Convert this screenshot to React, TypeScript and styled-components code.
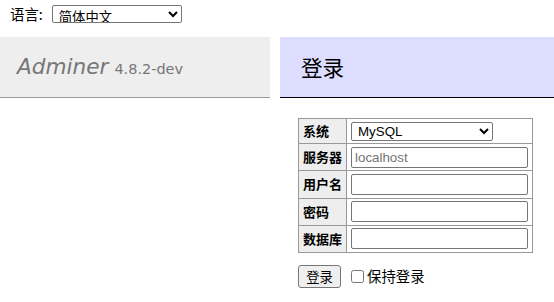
import styled, { createGlobalStyle } from 'styled-components';

const GlobalStyle = createGlobalStyle`
  html, body {
    margin: 0;
    padding: 0;
    background: #fff;
    overflow: hidden;
  }
  body {
    color: #000;
    font: 14.4px/1.25 "DejaVu Sans", "Noto Sans CJK SC", sans-serif;
  }
`;

const cjk = `"Noto Sans CJK SC", "DejaVu Sans", sans-serif`;
const control = `"Liberation Sans", "Noto Sans CJK SC", sans-serif`;

const Page = styled.div`
  width: 554px;
  height: 302px;
`;

const LangBar = styled.div`
  display: flex;
  align-items: center;
  gap: 9px;
  height: 28px;
  padding: 0 0 9px 10px;
  font-family: ${cjk};
  font-size: 14.4px;
`;

const LangSelect = styled.select`
  width: 130px;
  height: 18px;
  padding: 0 2px;
  font: 13.33px ${cjk};
  border: 1px solid #767676;
  border-radius: 2px;
  background: #fff;
  color: #000;
`;

const Main = styled.div`
  display: flex;
  align-items: flex-start;
  gap: 10px;
`;

const Menu = styled.div`
  width: 270px;
  flex: none;
`;

const Title = styled.h1`
  margin: 0;
  padding: 17px 14px 17px 14px;
  height: 26px;
  line-height: 26px;
  font-size: 21.6px;
  font-weight: normal;
  color: #777;
  background: #eee;
  border-bottom: 1px solid #999;
  white-space: nowrap;
`;

const Brand = styled.a`
  color: #777;
  font-style: italic;
  text-decoration: none;
  margin-left: 3px;
`;

const Version = styled.span`
  font-size: 14.47px;
  color: #777;
  margin-left: 6px;
`;

const Content = styled.div`
  flex: 1;
`;

const Heading = styled.h2`
  margin: 0;
  padding: 17px 21px;
  height: 26px;
  line-height: 26px;
  font-family: ${cjk};
  font-size: 21.6px;
  font-weight: normal;
  color: #000;
  background: #ddf;
  border-bottom: 1px solid #000;
`;

const LoginForm = styled.form`
  margin: 20px 0 0 18px;
`;

const Layout = styled.table`
  border-collapse: collapse;
  font-family: ${cjk};
  font-size: 13px;
`;

const Label = styled.th`
  border: 1px solid #999;
  padding: 2.6px 4px;
  background: #eee;
  text-align: left;
  font-weight: bold;
  white-space: nowrap;
  line-height: 18px;
`;

const Cell = styled.td`
  border: 1px solid #999;
  padding: 2.6px 4px 2.6px 4px;
  line-height: 0;
`;

const DriverSelect = styled.select`
  width: 142px;
  height: 19px;
  padding: 0 2px;
  font: 13.33px ${control};
  border: 1px solid #767676;
  border-radius: 2px;
  background: #fff;
  color: #000;
`;

const Field = styled.input`
  box-sizing: border-box;
  width: 177px;
  height: 21px;
  padding: 1px 3px;
  font: 13.33px ${control};
  border: 1px solid #767676;
  border-radius: 2px;
  background: #fff;

  &::placeholder {
    color: #757575;
  }
`;

const Actions = styled.p`
  display: flex;
  align-items: center;
  margin: 12px 0 0;
  font-family: ${cjk};
  font-size: 14.4px;
`;

const Submit = styled.button`
  box-sizing: border-box;
  width: 43px;
  height: 23px;
  padding: 0;
  font: 13.33px ${cjk};
  color: #000;
  background: #efefef;
  border: 1px solid #767676;
  border-radius: 3px;
`;

const Remember = styled.label`
  display: flex;
  align-items: center;
  margin-left: 10px;
  gap: 3px;
`;

const Check = styled.input`
  width: 13px;
  height: 13px;
  margin: 0;
`;

const rows = [
  { label: '服务器', name: 'server', placeholder: 'localhost' },
  { label: '用户名', name: 'username' },
  { label: '密码', name: 'password', type: 'password' },
  { label: '数据库', name: 'db' },
];

export default function App() {
  return (
    <Page>
      <GlobalStyle />
      <LangBar>
        <span>语言:</span>
        <LangSelect defaultValue="zh">
          <option value="zh">简体中文</option>
          <option value="en">English</option>
        </LangSelect>
      </LangBar>

      <Main>
        <Menu>
          <Title>
            <Brand href="#">Adminer</Brand>
            <Version>4.8.2-dev</Version>
          </Title>
        </Menu>

        <Content>
          <Heading>登录</Heading>
          <LoginForm onSubmit={(e) => e.preventDefault()}>
            <Layout>
              <tbody>
                <tr>
                  <Label>系统</Label>
                  <Cell>
                    <DriverSelect defaultValue="server">
                      <option value="server">MySQL</option>
                      <option value="sqlite">SQLite 3</option>
                      <option value="pgsql">PostgreSQL</option>
                    </DriverSelect>
                  </Cell>
                </tr>
                {rows.map((row) => (
                  <tr key={row.name}>
                    <Label>{row.label}</Label>
                    <Cell>
                      <Field name={row.name} type={row.type ?? 'text'} placeholder={row.placeholder} />
                    </Cell>
                  </tr>
                ))}
              </tbody>
            </Layout>

            <Actions>
              <Submit type="submit">登录</Submit>
              <Remember>
                <Check type="checkbox" />
                保持登录
              </Remember>
            </Actions>
          </LoginForm>
        </Content>
      </Main>
    </Page>
  );
}
